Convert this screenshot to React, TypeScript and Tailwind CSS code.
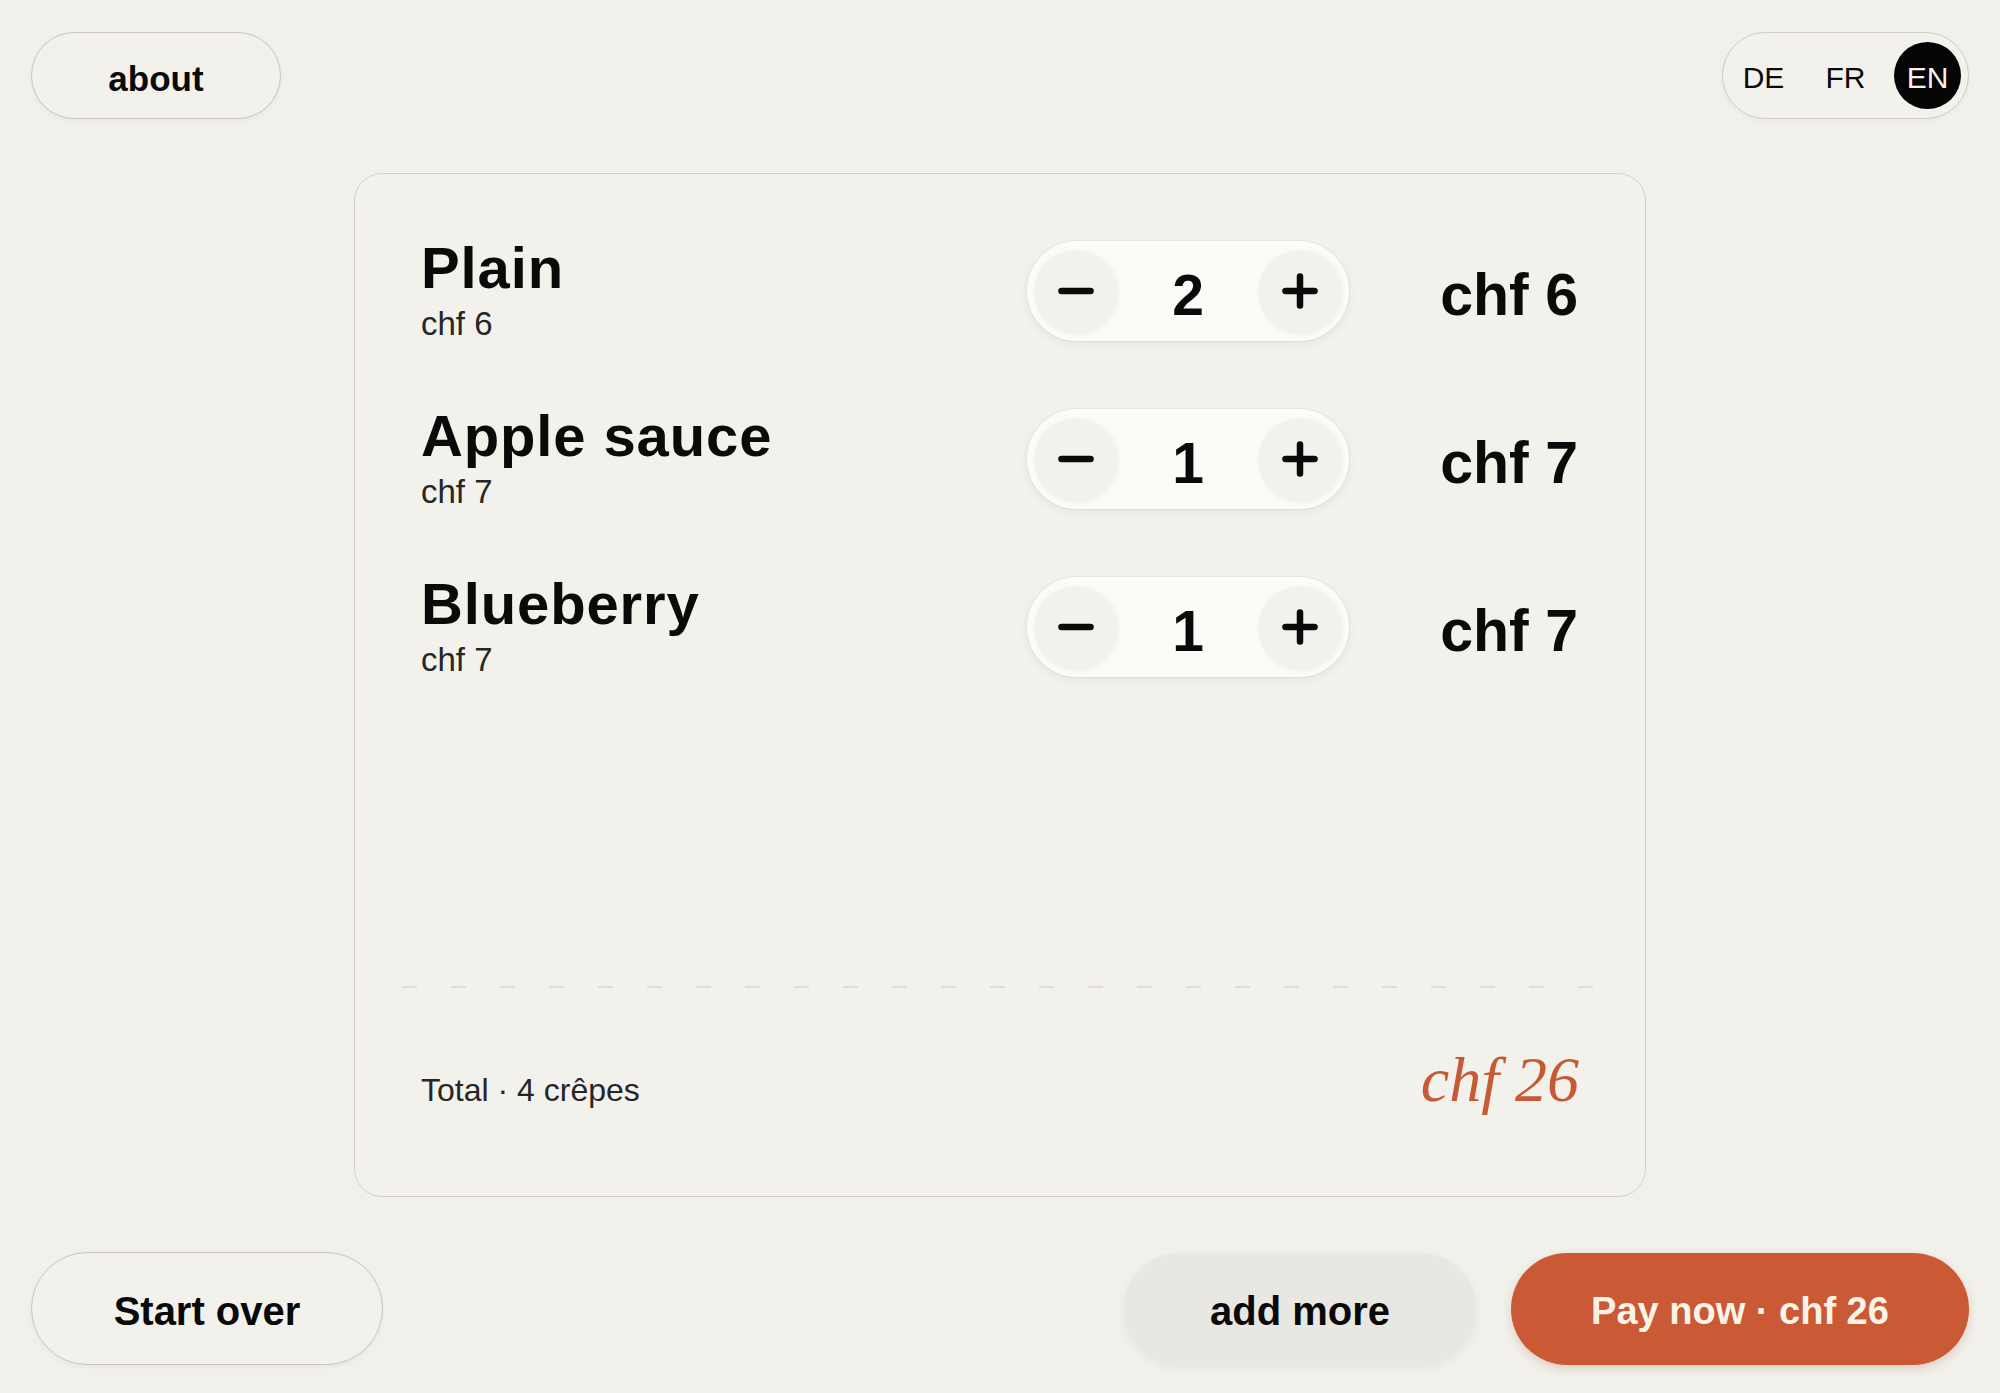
import { useState } from "react";

interface CartLine {
  id: string;
  name: string;
  price: number;
  qty: number;
}

const INITIAL_CART: CartLine[] = [
  { id: "plain", name: "Plain", price: 6, qty: 2 },
  { id: "apple", name: "Apple sauce", price: 7, qty: 1 },
  { id: "blueberry", name: "Blueberry", price: 7, qty: 1 },
];

const LANGS = ["DE", "FR", "EN"];

function MinusIcon() {
  return (
    <svg width="36" height="36" viewBox="0 0 36 36" fill="none">
      <path d="M3.5 18h29" stroke="#0a0a0a" strokeWidth="6.5" strokeLinecap="round" />
    </svg>
  );
}

function PlusIcon() {
  return (
    <svg width="36" height="36" viewBox="0 0 36 36" fill="none">
      <path d="M3.5 18h29M18 3.5v29" stroke="#0a0a0a" strokeWidth="6.5" strokeLinecap="round" />
    </svg>
  );
}

function Stepper({ qty, onDec, onInc }: { qty: number; onDec: () => void; onInc: () => void }) {
  return (
    <div className="flex items-center justify-between w-[322px] h-[100px] px-[7px] rounded-full bg-[#fbfbf8] shadow-[0_3px_8px_rgba(60,50,30,0.07),0_0_0_1px_rgba(230,228,220,0.6)]">
      <button
        onClick={onDec}
        className="flex items-center justify-center w-[84px] h-[84px] rounded-full bg-[#f2f1ed] shadow-[1px_2px_4px_rgba(60,50,30,0.06),inset_0_1px_1px_rgba(255,255,255,0.7)]"
      >
        <MinusIcon />
      </button>
      <span className="pt-[8px] text-[57px] leading-none font-bold text-[#0a0a0a]">{qty}</span>
      <button
        onClick={onInc}
        className="flex items-center justify-center w-[84px] h-[84px] rounded-full bg-[#f2f1ed] shadow-[1px_2px_4px_rgba(60,50,30,0.06),inset_0_1px_1px_rgba(255,255,255,0.7)]"
      >
        <PlusIcon />
      </button>
    </div>
  );
}

export default function App() {
  const [cart, setCart] = useState<CartLine[]>(INITIAL_CART);
  const [lang, setLang] = useState("EN");

  const changeQty = (id: string, delta: number) =>
    setCart((prev) =>
      prev.map((line) => (line.id === id ? { ...line, qty: Math.max(0, line.qty + delta) } : line))
    );

  const total = cart.reduce((sum, line) => sum + line.price * line.qty, 0);
  const count = cart.reduce((sum, line) => sum + line.qty, 0);

  return (
    <div className="w-full h-[1393px] flex flex-col px-[31px] pt-[32px] bg-[#f1f0eb] text-[#0a0a0a] font-['Liberation_Sans',Arial,sans-serif] overflow-hidden">
      {/* header */}
      <div className="flex items-start justify-between">
        <button className="w-[250px] h-[87px] pt-[5px] rounded-full border-[1.5px] border-[#c9c6be] bg-[#f2f1ec] shadow-[0_2px_4px_rgba(60,50,30,0.05)] text-[35px] font-bold leading-none">
          about
        </button>
        <div className="flex items-center gap-[15px] h-[87px] px-[7px] rounded-full border-[1.5px] border-[#cfccc4] bg-[#f2f1ec] shadow-[0_2px_4px_rgba(60,50,30,0.04)]">
          {LANGS.map((l) => (
            <button
              key={l}
              onClick={() => setLang(l)}
              className={
                l === lang
                  ? "flex items-center justify-center w-[67px] h-[67px] pt-[4px] rounded-full bg-[#050505] text-[#f4f3ef] text-[30px] leading-none"
                  : "flex items-center justify-center w-[67px] h-[67px] pt-[4px] rounded-full text-[#0a0a0a] text-[30px] leading-none"
              }
            >
              {l}
            </button>
          ))}
        </div>
      </div>

      {/* order card */}
      <div className="mt-[54px] mx-auto w-[1292px] h-[1024px] flex flex-col rounded-[28px] border-[1.5px] border-[#d4d1c9] bg-[#f2f1ec]">
        <div className="flex-1 flex flex-col gap-[64px] pt-[65px] pl-[66px] pr-[67px]">
          {cart.map((line) => (
            <div key={line.id} className="flex items-center h-[104px]">
              <div className="flex-1 flex flex-col">
                <span className="text-[58px] leading-none font-bold tracking-[0.015em]">{line.name}</span>
                <span className="mt-[7px] text-[33px] leading-[40px] text-[#262626]">chf {line.price}</span>
              </div>
              <Stepper
                qty={line.qty}
                onDec={() => changeQty(line.id, -1)}
                onInc={() => changeQty(line.id, 1)}
              />
              <span className="w-[229px] pt-[8px] text-right text-[59px] leading-none font-bold">
                chf {line.price}
              </span>
            </div>
          ))}
        </div>

        <div className="mx-[47px] h-[2px] bg-[repeating-linear-gradient(to_right,#e0ddd5_0_15px,transparent_15px_49px)]" />

        <div className="flex items-baseline justify-between pt-[60px] pb-[84px] pl-[66px] pr-[66px]">
          <span className="text-[32px] leading-[40px] text-[#262626]">Total · {count} crêpes</span>
          <span className="font-['Liberation_Serif',serif] italic text-[64px] leading-none text-[#c65a34]">
            chf {total}
          </span>
        </div>
      </div>

      {/* footer actions */}
      <div className="mt-[55px] flex items-center justify-between">
        <button className="w-[352px] h-[113px] pt-[4px] rounded-full border-[1.5px] border-[#c9c6be] bg-[#f2f1ec] shadow-[0_2px_4px_rgba(60,50,30,0.05)] text-[40px] font-bold leading-none">
          Start over
        </button>
        <div className="flex items-center gap-[35px]">
          <button className="w-[352px] h-[112px] pt-[4px] rounded-full bg-[#e8e7e1] shadow-[0_3px_8px_rgba(60,50,30,0.06)] text-[40px] font-bold leading-none">
            add more
          </button>
          <button className="w-[458px] h-[112px] pt-[4px] rounded-full bg-[#c95a35] shadow-[0_4px_10px_rgba(150,60,30,0.18)] text-[38px] font-bold leading-none text-[#fbf2e8]">
            Pay now · chf {total}
          </button>
        </div>
      </div>
    </div>
  );
}
